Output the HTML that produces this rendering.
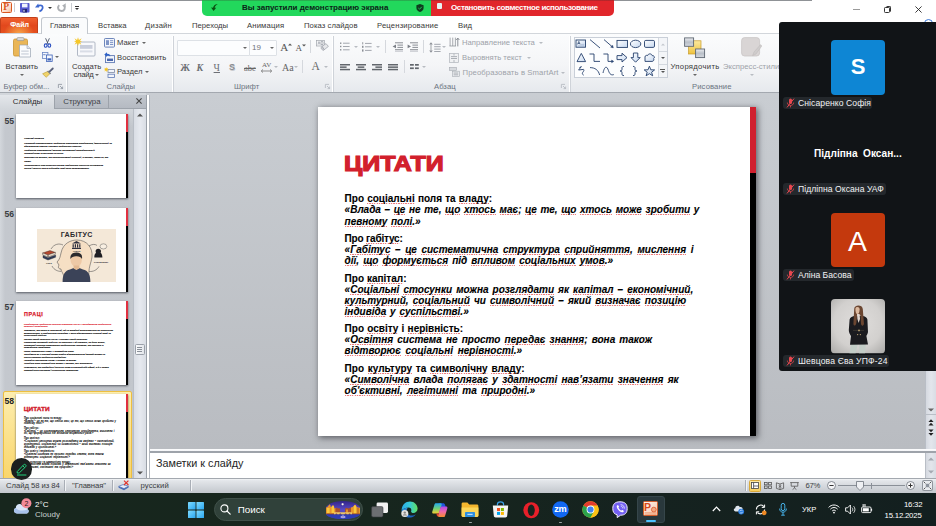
<!DOCTYPE html>
<html lang="ru">
<head>
<meta charset="utf-8">
<title>PowerPoint</title>
<style>
*{box-sizing:border-box;margin:0;padding:0}
html,body{width:936px;height:526px;overflow:hidden;background:#fff}
body{font-family:"Liberation Sans",sans-serif;font-size:7.7px;color:#3a3a3a;position:relative}
.abs,.t,svg{position:absolute}
.t{white-space:pre;line-height:1}
svg{overflow:visible}
#titlebar{left:0;top:0;width:936px;height:16px;background:#fff}
#topline{left:6px;top:0;width:806px;height:1px;background:#8f9296}
#tabsrow{left:0;top:16px;width:936px;height:17px;background:#fff}
#ribbon{left:0;top:33px;width:936px;height:59px;background:linear-gradient(#fbfcfd,#f4f5f7 55%,#e6e9ed);border-top:1px solid #d2d6db}
#ribline{left:0;top:92px;width:936px;height:1.6px;background:linear-gradient(#9ea3aa,#b4b9bf)}
#work{left:0;top:93px;width:936px;height:385px;background:#c9cdd2}
#main{left:150px;top:93px;width:775px;height:356px;background:linear-gradient(#c9cdd2,#b9bcc1)}
#slide{left:318px;top:107px;width:438px;height:329px;background:#fff;box-shadow:1px 1px 6px 0.5px rgba(50,52,58,.68)}
#status{left:0;top:478px;width:936px;height:14.5px;background:linear-gradient(#f3f4f6 0,#e3e6ea 12%,#c3c7cd 100%);border-top:1px solid #a3a8af}
#taskbar{left:0;top:492.5px;width:936px;height:33.5px;background:linear-gradient(90deg,#17261d 0,#17261e 40%,#15221f 70%,#131f1f 100%)}
#zoom{left:779px;top:22px;width:157px;height:349px;background:#111417;border-radius:3px 0 0 3px}
#green{left:202px;top:0;width:230px;height:16px;background:linear-gradient(#2b9047 0,#22d85c 1.2px);border-radius:0 0 0 5px}
#red{left:431px;top:0;width:183px;height:16px;background:linear-gradient(#96272a 0,#e1262b 1.2px);border-radius:0 0 5px 0}
.ban{font-weight:bold;font-size:8px;top:4px}
.tab{font-size:7.7px;top:21.5px;color:#3a3a3a}
#filetab{left:0;top:17px;width:38px;height:16px;border-radius:2px 2px 0 0;background:radial-gradient(ellipse at 50% 110%,#f8a84a 0,rgba(248,168,74,0) 60%),linear-gradient(#f0602f 0,#e2481d 50%,#e5501f 100%);border:1px solid #c2401a;border-bottom:0}
#hometab{left:41.3px;top:17px;width:46.7px;height:17px;border-radius:3px 3px 0 0;background:#fafbfc;border:1px solid #c3c8ce;border-bottom:0}
.gl{top:82.5px;color:#6b7480}
.sep{top:36px;width:2px;height:56px;background:linear-gradient(90deg,#fff 50%,#cfd3d9 50%)}
.rl{color:#3a3a3a}
.dis{color:#9da2a9}
.arr{width:0;height:0;border-left:2px solid transparent;border-right:2px solid transparent;border-top:2.5px solid #666}
.arr.dis{border-top-color:#b8bcc2}
.sl{position:absolute;left:344.6px;font-size:10px;font-weight:bold;line-height:1;white-space:pre;color:#000;-webkit-text-stroke:0.1px #000}
.sl.it{font-style:italic}
.sl u{text-decoration:none;background:repeating-linear-gradient(90deg,rgba(225,60,60,.75) 0 1.3px,rgba(225,60,60,.15) 1.3px 2.4px) 0 calc(100% - 0.3px)/100% 0.9px no-repeat}
.st{position:absolute;font-size:21.2px;font-weight:bold;color:#d2202c;transform-origin:0 0;transform:scaleX(1.178);-webkit-text-stroke:1.2px #d2202c;line-height:1;white-space:pre}
#sbar_r{left:750px;top:107px;width:6px;height:66px;background:#d0202e}
#sbar_k{left:750px;top:173px;width:6px;height:263px;background:#000}
#pane{left:0;top:93px;width:146px;height:385px;background:linear-gradient(#d3d7dc 16px,rgba(211,215,220,0) 34px),linear-gradient(90deg,#d3d7dc 0,#c4c8ce 5px,#c2c6cc 100%)}
#panehdr{left:0;top:95px;width:146px;height:13.5px;background:linear-gradient(#c2c7ce,#b5bac2);border-bottom:1px solid #9da3ab}
#ptab1{left:0;top:94.5px;width:54.5px;height:14.5px;background:linear-gradient(#e4e7eb,#d3d7dc);border-right:1px solid #9da3ab}
#ptab2{left:54px;top:95px;width:55px;height:13px;border-right:1px solid #9da3ab}
.ptxt{font-size:7.9px;top:97.7px;color:#2b2b2b}
#pscroll{left:133px;top:109px;width:13px;height:369px;background:linear-gradient(90deg,#d9dde4,#e6e9ef 50%,#d9dde4);border-left:1px solid #b9bec6}
#split{left:146px;top:95px;width:4px;height:383px;background:#fff;border-left:1px solid #9aa0a8;border-right:1px solid #b3b8bf}
.th{position:absolute;left:16.3px;width:112px;height:84.5px;background:#fff;box-shadow:0 0.5px 2px rgba(40,45,55,.7);overflow:hidden}
.th .r{position:absolute;right:0;top:0;width:2.6px;height:18px;background:#e03040}
.th .k{position:absolute;right:0;top:18px;width:2.6px;height:67px;background:#000}
.tn{font-size:8.6px;font-weight:bold;color:#3a3d42;left:4.5px}
.mini{position:absolute;white-space:pre;line-height:1;color:#111;font-size:2.6px;font-weight:bold;-webkit-text-stroke:0.12px currentColor}
#sel{left:2.5px;top:391px;width:129.5px;height:90px;background:linear-gradient(#fdeeb0,#f9d56a);border:1px solid #eebf3f;border-radius:2px}
#vscroll{left:925px;top:93px;width:11px;height:356px;background:linear-gradient(90deg,#d5d9e0,#e3e6ec 50%,#d9dde4);border-left:1px solid #b9bec6}
#hsplit{left:150px;top:448.5px;width:786px;height:4px;background:linear-gradient(#fdfdfe 0,#f1f3f5 60%,#9ea3aa 60%,#9ea3aa 100%)}
#notes{left:150px;top:452.5px;width:775px;height:25.5px;background:#fff}
#nscroll{left:925px;top:452.5px;width:11px;height:25.5px;background:linear-gradient(90deg,#d5d9e0,#e3e6ec 50%,#d9dde4);border-left:1px solid #b9bec6}
.ssep{top:480px;width:2px;height:11px;background:linear-gradient(90deg,#a9aeb6 50%,#f2f4f6 50%)}
.stxt{top:482.2px;color:#3a3d42}
.tb{color:#fff}
.nm{position:absolute;height:11.5px;left:783px;background:#24282c;border-radius:3px}
.nmt{font-size:8.6px;color:#f2f3f4;left:798px}
.m57{font-size:2.35px;-webkit-text-stroke:0.12px currentColor}

</style>
</head>
<body>
<div id="titlebar" class="abs"></div>
<div id="topline" class="abs"></div>
<div id="tabsrow" class="abs"></div>
<div id="ribbon" class="abs"></div>
<div id="ribline" class="abs"></div>
<div id="work" class="abs"></div>
<div id="main" class="abs"></div>
<div id="slide" class="abs"></div>

<div id="green" class="abs"></div>
<svg style="left:204px;top:0" width="30" height="16" viewBox="0 0 30 16"><path d="M13.9 4.1 C11.2 4.2 9.6 5.6 9 7.7 L7 7.6 L9.6 10.9 L12.2 7.8 L10.7 7.8 C11 6.3 12 5 13.9 4.1 Z" fill="#0a5212"/></svg>
<span class="t ban" style="left:242px;top:4.4px;color:#0b2418">Вы запустили демонстрацию экрана</span>
<svg style="left:416px;top:4px" width="8" height="8" viewBox="0 0 8 8"><path d="M4 0 L7.6 1.2 V4 C7.6 6 5.8 7.4 4 8 C2.2 7.4 0.4 6 0.4 4 V1.2 Z" fill="#0f3d1f"/><path d="M2.3 4 L3.6 5.2 L5.8 2.8" stroke="#23d15c" stroke-width="0.9" fill="none"/></svg>
<div id="red" class="abs"></div>
<div class="abs" style="left:437px;top:3px;width:5px;height:6px;background:#e6f4f4;border-radius:1px"></div>
<span class="t ban" style="left:451px;top:4.4px;color:#fff;letter-spacing:-0.38px">Остановить совместное использование</span>
<div id="filetab" class="abs"></div>
<span class="t tab" style="left:10.2px;color:#fff;font-weight:bold;font-size:7.1px;top:21.9px">Файл</span>
<div id="hometab" class="abs"></div>
<span class="t tab" style="left:50px">Главная</span>
<span class="t tab" style="left:98px">Вставка</span>
<span class="t tab" style="left:145px;letter-spacing:.2px">Дизайн</span>
<span class="t tab" style="left:192px">Переходы</span>
<span class="t tab" style="left:247px;letter-spacing:.15px">Анимация</span>
<span class="t tab" style="left:304px;letter-spacing:.05px">Показ слайдов</span>
<span class="t tab" style="left:377px;letter-spacing:.15px">Рецензирование</span>
<span class="t tab" style="left:458px">Вид</span>

<!-- quick access toolbar -->
<div class="abs" style="left:1px;top:2px;width:11px;height:11px;border-radius:1.5px;background:linear-gradient(135deg,#fff,#fbd9c4 70%,#f4b48e);border:1px solid #d9561f"></div>
<span class="t" style="left:3.2px;top:3px;font-family:'Liberation Serif',serif;font-weight:bold;font-size:9.5px;color:#d9541a">P</span>
<div class="abs" style="left:14px;top:3px;width:1px;height:9px;background:#c9ccd1"></div>
<svg style="left:20px;top:3px" width="10" height="10" viewBox="0 0 10 10"><rect x="0" y="0" width="9.5" height="9.5" rx="0.8" fill="#5558cf"/><rect x="2" y="0.6" width="5.5" height="3.8" fill="#f1f3fd"/><rect x="2.6" y="6" width="4.4" height="3.5" fill="#23246e"/><rect x="3.4" y="6.8" width="1.2" height="2" fill="#dfe5ff"/></svg>
<svg style="left:35.2px;top:3.2px" width="9" height="9" viewBox="0 0 9 9"><path d="M2.6 3.2 C5.4 1.4 8.2 2.6 7.6 5.2 C7.2 6.8 5.8 7.8 4.4 8.4" fill="none" stroke="#3d68d0" stroke-width="1.7"/><path d="M0 4.6 L3.2 0.4 L4.2 4.4 Z" fill="#3d68d0"/></svg>
<div class="abs arr" style="left:47.5px;top:6.5px;border-top-color:#333"></div>
<svg style="left:57.4px;top:3.2px" width="9" height="9" viewBox="0 0 9 9"><path d="M2.2 2.2 C0 4.4 1.2 8 4.4 8 C7.6 8 8.8 4.6 6.8 2.4" fill="none" stroke="#adb0b4" stroke-width="1.9"/><path d="M8.8 0.2 L8.6 4.2 L5 2.8 Z" fill="#adb0b4"/></svg>
<div class="abs" style="left:71px;top:3px;width:1px;height:9px;background:#c9ccd1"></div>
<div class="abs" style="left:74.5px;top:5.5px;width:4.5px;height:1px;background:#333"></div>
<div class="abs arr" style="left:74.7px;top:7.5px;border-top-color:#333"></div>
<!-- window controls -->
<div class="abs" style="left:853px;top:9px;width:7px;height:1px;background:#9a9a9a"></div>
<div class="abs" style="left:884px;top:7.3px;width:5.8px;height:5.6px;border:1px solid #333;border-radius:1.3px"></div>
<div class="abs" style="left:885.6px;top:6px;width:5.5px;height:5.5px;border-top:1px solid #333;border-right:1px solid #333;border-radius:1.5px 2px 1.5px 0"></div>
<svg style="left:915.2px;top:6px" width="7" height="7" viewBox="0 0 8 8"><path d="M0.5 0.5 L7.5 7.5 M7.5 0.5 L0.5 7.5" stroke="#222" stroke-width="1" fill="none"/></svg>
<div class="abs" style="left:923.5px;top:19px;width:9px;height:9px;border-radius:50%;background:#fff;border:1.6px solid #3b78d8"></div>

<!-- Clipboard group -->
<svg style="left:13px;top:37px" width="19" height="21" viewBox="0 0 19 21">
<rect x="0.5" y="2" width="14" height="17" rx="1.5" fill="#eab657" stroke="#c99535" stroke-width="0.8"/>
<rect x="4" y="0.6" width="7" height="3" rx="1" fill="#d9d9d9" stroke="#8d8d8d" stroke-width="0.6"/>
<path d="M6.5 8 H14 L17.5 11.5 V20 H6.5 Z" fill="#fafbfd" stroke="#9aa3b2" stroke-width="0.7"/>
<path d="M14 8 V11.5 H17.5" fill="#dfe4ec" stroke="#9aa3b2" stroke-width="0.6"/>
<rect x="8.2" y="13.4" width="7.5" height="1.5" fill="#d3d8e0"/><rect x="8.2" y="16.2" width="7.5" height="1.5" fill="#d3d8e0"/>
</svg>
<span class="t rl" style="left:5.5px;top:62.7px">Вставить</span>
<div class="abs arr" style="left:19.5px;top:73.5px"></div>
<svg style="left:43.5px;top:37.5px" width="7" height="10" viewBox="0 0 7 10"><path d="M1.6 0.3 L4.2 6 M5.4 0.3 L2.8 6" stroke="#4a5568" stroke-width="0.9" fill="none"/><ellipse cx="1.7" cy="7.6" rx="1.4" ry="1.7" fill="none" stroke="#2a4fc0" stroke-width="1.1"/><ellipse cx="5.3" cy="7.6" rx="1.4" ry="1.7" fill="none" stroke="#2a4fc0" stroke-width="1.1"/></svg>
<svg style="left:42px;top:52px" width="11" height="10" viewBox="0 0 11 10"><rect x="0.4" y="0.4" width="5.5" height="6" fill="#f4f7fd" stroke="#6b86c4" stroke-width="0.8"/><rect x="4.4" y="3" width="5.8" height="6.4" fill="#f4f7fd" stroke="#3d62b8" stroke-width="0.8"/><rect x="5.4" y="6.3" width="3.8" height="2.2" fill="#3d62b8"/><rect x="1.2" y="2.2" width="2.4" height="1" fill="#6b86c4"/></svg>
<div class="abs arr" style="left:55px;top:56px"></div>
<svg style="left:42px;top:68px" width="12" height="10" viewBox="0 0 12 10"><path d="M10.8 0.5 L7 4.2" stroke="#59607a" stroke-width="1.8" stroke-linecap="round"/><path d="M6.2 3.2 L8.2 5.4 L4.2 9.3 L0.6 5.8 Z" fill="#f0d36a" stroke="#b89a2e" stroke-width="0.6"/><path d="M5.6 3 L8.6 5.8" stroke="#7a7f8c" stroke-width="1.3"/></svg>
<span class="t gl" style="left:3.5px">Буфер обм...</span>
<svg style="left:58px;top:84px" width="5" height="5" viewBox="0 0 5 5"><path d="M0.4 4 V0.4 H4" stroke="#8c939d" stroke-width="0.8" fill="none"/><path d="M2 2 L4.6 4.6 M4.6 2.6 V4.6 H2.6" stroke="#8c939d" stroke-width="0.8" fill="none"/></svg>
<div class="abs sep" style="left:65.5px"></div>
<!-- Slides group -->
<svg style="left:74px;top:37px" width="22" height="21" viewBox="0 0 22 21">
<rect x="3.5" y="5" width="17.5" height="14" rx="1" fill="#f8f9fc" stroke="#a8b0be" stroke-width="0.9"/>
<rect x="6" y="8" width="12.5" height="3.8" fill="#c9cedb"/><rect x="6" y="13.4" width="12.5" height="2" fill="#d9dde6"/>
<path d="M4 0.2 L4.9 3 L7.6 1.2 L6 4 L8 4.6 L6 5.2 L7.4 7.8 L4.9 6.2 L4 9 L3.1 6.2 L0.5 7.8 L2 5.2 L0 4.6 L2 4 L0.5 1.2 L3.1 3 Z" fill="#f6c728"/>
</svg>
<span class="t rl" style="left:72px;top:62.7px">Создать</span>
<span class="t rl" style="left:73.5px;top:70.5px;letter-spacing:-.3px">слайд</span>
<div class="abs arr" style="left:95px;top:73.5px"></div>
<svg style="left:104px;top:37.5px" width="11" height="10" viewBox="0 0 11 10"><rect x="0.5" y="0.5" width="10" height="8.6" rx="0.8" fill="#f2f5fb" stroke="#5f79b4" stroke-width="0.9"/><rect x="2" y="2.2" width="3" height="4.8" fill="#7f95c6"/><rect x="6" y="2.2" width="3.2" height="1" fill="#7f95c6"/><rect x="6" y="4.1" width="3.2" height="1" fill="#7f95c6"/><rect x="6" y="6" width="3.2" height="1" fill="#7f95c6"/></svg>
<span class="t rl" style="left:117px;top:38.5px">Макет</span>
<div class="abs arr" style="left:142px;top:41.5px"></div>
<svg style="left:104px;top:51.5px" width="11" height="11" viewBox="0 0 11 11"><rect x="1.5" y="3.6" width="9" height="7" fill="#f2f5fb" stroke="#5f79b4" stroke-width="0.9"/><rect x="3" y="6.6" width="6" height="2.4" fill="#4a67ad"/><path d="M0.3 2.6 L3 0.2 V1.7 C5.4 1.6 6.4 2.6 6.2 4.6 C5.6 3.5 4.6 3.3 3 3.4 V5 Z" fill="#2f62c8"/></svg>
<span class="t rl" style="left:117px;top:54px">Восстановить</span>
<svg style="left:104px;top:66.5px" width="11" height="11" viewBox="0 0 11 11"><rect x="4" y="2.4" width="6.5" height="3" fill="#f2f5fb" stroke="#7d8aa6" stroke-width="0.8"/><rect x="4" y="7.2" width="6.5" height="3.2" fill="#f2f5fb" stroke="#5f79b4" stroke-width="0.8"/><path d="M2.2 0 L2.7 1.6 L4.2 0.8 L3.3 2.2 L4.6 2.6 L3.3 3 L4 4.6 L2.7 3.6 L2.2 5.2 L1.7 3.6 L0.3 4.6 L1.1 3 L0 2.6 L1.1 2.2 L0.3 0.8 L1.7 1.6 Z" fill="#f2c21d"/></svg>
<span class="t rl" style="left:117px;top:68.2px">Раздел</span>
<div class="abs arr" style="left:144.5px;top:70.5px"></div>
<span class="t gl" style="left:106.5px">Слайды</span>
<div class="abs sep" style="left:171.5px"></div>

<!-- Font group -->
<div class="abs" style="left:176.5px;top:40.3px;width:73.5px;height:15.4px;background:#fcfdfe;border:1px solid #dde1e6;border-radius:1px"></div>
<div class="abs arr" style="left:242.5px;top:47px"></div>
<div class="abs" style="left:249.3px;top:40.3px;width:27.7px;height:15.4px;background:#fcfdfe;border:1px solid #dde1e6;border-radius:1px"></div>
<span class="t" style="left:252px;top:44.3px;color:#707479;font-size:8px">19</span>
<div class="abs arr" style="left:269.7px;top:47px"></div>
<span class="t" style="left:280.3px;top:42px;font-family:'Liberation Serif',serif;font-size:11px;color:#555">A</span>
<svg style="left:287.5px;top:43px" width="4" height="3" viewBox="0 0 4 3"><path d="M0 2.6 L2 0.4 L4 2.6 Z" fill="#555"/></svg>
<span class="t" style="left:295.6px;top:44px;font-family:'Liberation Serif',serif;font-size:9px;color:#555">A</span>
<svg style="left:301.5px;top:43.5px" width="4" height="3" viewBox="0 0 4 3"><path d="M0 0.4 L2 2.6 L4 0.4 Z" fill="#555"/></svg>
<div class="abs" style="left:310px;top:40px;width:1px;height:13px;background:#d5d8dd"></div>
<svg style="left:316px;top:40px" width="13" height="12" viewBox="0 0 13 12"><rect x="0.5" y="0.5" width="8" height="5.5" fill="#f3f4f6" stroke="#a0a4ab" stroke-width="0.7"/><path d="M2 4.5 L3 1.6 L4 4.5 M5 1.6 h2 v2.9 h-2 z" stroke="#8a8f98" stroke-width="0.6" fill="none"/><path d="M6 6.5 L10 3.6 L12.4 6.4 L8.4 9.6 Z" fill="#e6e7ea" stroke="#9a9ea6" stroke-width="0.7"/><path d="M6 6.5 L8.4 9.6 L7 10.6 L4.8 8 Z" fill="#c8cad0" stroke="#9a9ea6" stroke-width="0.6"/></svg>
<span class="t" style="left:180.3px;top:62.8px;font-family:'Liberation Serif',serif;font-weight:bold;font-size:9.8px;color:#6d7075">Ж</span>
<span class="t" style="left:196.5px;top:62.8px;font-family:'Liberation Serif',serif;font-style:italic;font-weight:bold;font-size:9.8px;color:#6d7075">К</span>
<span class="t" style="left:213.6px;top:62.8px;font-family:'Liberation Serif',serif;font-size:9.8px;color:#6d7075;text-decoration:underline">Ч</span>
<span class="t" style="left:229px;top:62.5px;font-family:'Liberation Sans',sans-serif;font-weight:bold;font-size:9px;color:#8a8d92;text-shadow:0.6px 0.6px 0 #c9cbcf">S</span>
<span class="t" style="left:244px;top:63.5px;font-family:'Liberation Serif',serif;font-size:8.5px;color:#666;text-decoration:line-through">abe</span>
<span class="t" style="left:262px;top:61.5px;font-family:'Liberation Serif',serif;font-size:7px;color:#666">AV</span>
<svg style="left:261px;top:68.5px" width="11" height="4" viewBox="0 0 11 4"><path d="M0.3 2 H10.7 M2 0.4 L0.3 2 L2 3.6 M9 0.4 L10.7 2 L9 3.6" stroke="#666" stroke-width="0.7" fill="none"/></svg>
<div class="abs arr dis" style="left:273.5px;top:66px"></div>
<span class="t" style="left:282px;top:62.5px;font-family:'Liberation Serif',serif;font-size:10px;color:#666">Aa</span>
<div class="abs arr dis" style="left:294px;top:66px"></div>
<div class="abs" style="left:302px;top:60px;width:1px;height:13px;background:#d5d8dd"></div>
<span class="t" style="left:311.5px;top:61px;font-family:'Liberation Serif',serif;font-size:11.5px;color:#666">A</span>
<div class="abs arr dis" style="left:323.5px;top:66px"></div>
<span class="t gl" style="left:234px">Шрифт</span>
<svg style="left:324.5px;top:84px" width="5" height="5" viewBox="0 0 5 5"><path d="M0.4 4 V0.4 H4" stroke="#b3b8bf" stroke-width="0.8" fill="none"/><path d="M2 2 L4.6 4.6 M4.6 2.6 V4.6 H2.6" stroke="#b3b8bf" stroke-width="0.8" fill="none"/></svg>
<div class="abs sep" style="left:332px"></div>
<!-- Paragraph group -->
<svg style="left:340px;top:42px" width="10" height="9" viewBox="0 0 10 9"><g fill="#8a8e95"><rect x="0" y="0.5" width="1.4" height="1.4"/><rect x="0" y="3.8" width="1.4" height="1.4"/><rect x="0" y="7.1" width="1.4" height="1.4"/></g><g fill="#a3a7ae"><rect x="3" y="0.7" width="6.6" height="1"/><rect x="3" y="4" width="6.6" height="1"/><rect x="3" y="7.3" width="6.6" height="1"/></g></svg>
<div class="abs arr dis" style="left:353.5px;top:46px"></div>
<svg style="left:362px;top:41.5px" width="10" height="10" viewBox="0 0 10 10"><g fill="#8a8e95"><rect x="0.3" y="0.2" width="0.9" height="2.2"/><rect x="0" y="3.8" width="1.5" height="2"/><rect x="0" y="7.4" width="1.5" height="2.2"/></g><g fill="#a3a7ae"><rect x="3" y="0.9" width="6.6" height="1"/><rect x="3" y="4.3" width="6.6" height="1"/><rect x="3" y="7.9" width="6.6" height="1"/></g></svg>
<div class="abs arr dis" style="left:375.5px;top:46px"></div>
<div class="abs" style="left:384.5px;top:40px;width:1px;height:13px;background:#d5d8dd"></div>
<svg style="left:391.5px;top:42px" width="11" height="10" viewBox="0 0 11 10"><g fill="#8a8e95"><rect x="3" y="0.3" width="8" height="1"/><rect x="5.4" y="2.6" width="5.6" height="1"/><rect x="5.4" y="4.9" width="5.6" height="1"/><rect x="3" y="7.2" width="8" height="1"/></g><path d="M4 2.6 L0.6 4.4 L4 6.2 Z" fill="#7a7e86"/><rect x="3" y="8.8" width="8" height="0.8" fill="#b8bcc2"/></svg>
<svg style="left:407px;top:42px" width="11" height="10" viewBox="0 0 11 10"><g fill="#8a8e95"><rect x="3" y="0.3" width="8" height="1"/><rect x="5.4" y="2.6" width="5.6" height="1"/><rect x="5.4" y="4.9" width="5.6" height="1"/><rect x="3" y="7.2" width="8" height="1"/></g><path d="M0.6 2.6 L4 4.4 L0.6 6.2 Z" fill="#7a7e86"/><rect x="3" y="8.8" width="8" height="0.8" fill="#b8bcc2"/></svg>
<div class="abs" style="left:422.5px;top:40px;width:1px;height:13px;background:#d5d8dd"></div>
<svg style="left:428.5px;top:41.5px" width="12" height="11" viewBox="0 0 12 11"><path d="M2 0.3 L0.2 2.6 H3.8 Z M2 10.7 L0.2 8.4 H3.8 Z" fill="#8a8e95"/><rect x="1.6" y="2.4" width="0.8" height="6.2" fill="#8a8e95"/><g fill="#a3a7ae"><rect x="5.2" y="1.8" width="6.4" height="1"/><rect x="5.2" y="4.2" width="6.4" height="1"/><rect x="5.2" y="6.6" width="6.4" height="1"/><rect x="5.2" y="9" width="6.4" height="1"/></g></svg>
<div class="abs arr dis" style="left:441.5px;top:46px"></div>
<!-- row 2 align -->
<svg style="left:340px;top:63.8px" width="10" height="7" viewBox="0 0 10 7"><g fill="#62666c"><rect x="0" y="0" width="10" height="1.5"/><rect x="0" y="2.4" width="6.6" height="1.5"/><rect x="0" y="4.8" width="10" height="1.5"/></g></svg>
<svg style="left:356px;top:63.8px" width="10" height="7" viewBox="0 0 10 7"><g fill="#62666c"><rect x="0" y="0" width="10" height="1.5"/><rect x="1.7" y="2.4" width="6.6" height="1.5"/><rect x="0" y="4.8" width="10" height="1.5"/></g></svg>
<svg style="left:372px;top:63.8px" width="10" height="7" viewBox="0 0 10 7"><g fill="#62666c"><rect x="0" y="0" width="10" height="1.5"/><rect x="3.4" y="2.4" width="6.6" height="1.5"/><rect x="0" y="4.8" width="10" height="1.5"/></g></svg>
<svg style="left:388px;top:63.8px" width="10" height="7" viewBox="0 0 10 7"><g fill="#62666c"><rect x="0" y="0" width="10" height="1.5"/><rect x="0" y="2.4" width="10" height="1.5"/><rect x="0" y="4.8" width="10" height="1.5"/></g></svg>
<div class="abs" style="left:404px;top:60px;width:1px;height:13px;background:#d5d8dd"></div>
<svg style="left:410px;top:64.2px" width="9" height="6" viewBox="0 0 9 6"><g fill="#62666c"><rect x="0" y="0" width="3.8" height="1.7"/><rect x="5" y="0" width="3.8" height="1.7"/><rect x="0" y="3.4" width="3.8" height="1.7"/><rect x="5" y="3.4" width="3.8" height="1.7"/></g></svg>
<div class="abs arr dis" style="left:422px;top:66px"></div>
<!-- right column of paragraph group -->
<svg style="left:449px;top:37.3px" width="11" height="10" viewBox="0 0 10 10" preserveAspectRatio="none"><path d="M1 9 V0.6 M3.4 9 V0.6 M5.8 9 V0.6" stroke="#8a8e95" stroke-width="0.7"/><path d="M8 9.4 V1.6 M6.6 3 L8 1 L9.4 3" stroke="#7a7e86" stroke-width="0.8" fill="none"/><path d="M0.4 9 H6.4" stroke="#8a8e95" stroke-width="0.7"/></svg>
<span class="t dis" style="left:462px;top:38.5px">Направление текста</span>
<div class="abs arr dis" style="left:539px;top:41.5px"></div>
<svg style="left:449px;top:52.5px" width="10" height="10" viewBox="0 0 10 10"><rect x="0.5" y="0.5" width="9" height="9" fill="#f0f1f3" stroke="#b0b4bb" stroke-width="0.7"/><g fill="#a3a7ae"><rect x="2" y="3.2" width="6" height="0.9"/><rect x="2" y="5" width="6" height="0.9"/></g><path d="M5 0.8 V2.6 M5 9.2 V7" stroke="#9a9ea6" stroke-width="0.7"/></svg>
<span class="t dis" style="left:462px;top:54px">Выровнять текст</span>
<div class="abs arr dis" style="left:526.5px;top:56.5px"></div>
<svg style="left:448.5px;top:67px" width="11" height="10" viewBox="0 0 11 10"><rect x="0.4" y="0.4" width="7" height="3" fill="#d7dade" stroke="#a6abb2" stroke-width="0.6"/><rect x="3.4" y="4.2" width="7" height="5.4" fill="#eceef1" stroke="#a6abb2" stroke-width="0.6"/><rect x="4.6" y="5.6" width="4.6" height="0.9" fill="#a3a7ae"/><rect x="4.6" y="7.4" width="4.6" height="0.9" fill="#a3a7ae"/></svg>
<span class="t dis" style="left:462.5px;top:68.9px;letter-spacing:.12px">Преобразовать в SmartArt</span>
<div class="abs arr dis" style="left:560.5px;top:71.5px"></div>
<span class="t gl" style="left:434px">Абзац</span>
<svg style="left:561px;top:84px" width="5" height="5" viewBox="0 0 5 5"><path d="M0.4 4 V0.4 H4" stroke="#b3b8bf" stroke-width="0.8" fill="none"/><path d="M2 2 L4.6 4.6 M4.6 2.6 V4.6 H2.6" stroke="#b3b8bf" stroke-width="0.8" fill="none"/></svg>
<div class="abs sep" style="left:568.5px"></div>

<!-- Drawing group: shapes gallery -->
<div class="abs" style="left:573.5px;top:37px;width:94px;height:40.5px;background:#fcfdfe;border:1px solid #c9cfd8"></div>
<div class="abs" style="left:657.5px;top:37.5px;width:9.5px;height:39.5px;background:#f3f5f8;border-left:1px solid #d3d8df"></div>
<div class="abs" style="left:657.5px;top:50.5px;width:9.5px;height:1px;background:#d3d8df"></div>
<div class="abs" style="left:657.5px;top:64px;width:9.5px;height:1px;background:#d3d8df"></div>
<svg style="left:660.5px;top:43px" width="4" height="3" viewBox="0 0 4 3"><path d="M0 2.6 L2 0.4 L4 2.6 Z" fill="#c3c7cd"/></svg>
<div class="abs arr" style="left:660.5px;top:56.5px;border-top-color:#555"></div>
<div class="abs" style="left:660.3px;top:68.5px;width:4.5px;height:1px;background:#555"></div>
<div class="abs arr" style="left:660.5px;top:70.5px;border-top-color:#555"></div>
<svg style="left:574px;top:37px" width="84" height="41" viewBox="574 37 84 41" fill="none" stroke="#25406c" stroke-width="0.9">
<defs><linearGradient id="sg" x1="0" y1="0" x2="1" y2="1"><stop offset="0" stop-color="#ffffff"/><stop offset="1" stop-color="#c6d8f0"/></linearGradient></defs>
<!-- row1 -->
<rect x="576" y="40" width="9.5" height="7.2" fill="url(#sg)"/><rect x="576.4" y="40.4" width="8.7" height="2.2" fill="#2f4d7c" stroke="none" opacity=".0"/><path d="M577.5 44.4 L578.8 41.4 L580.1 44.4 M578 43.5 H579.6" stroke-width="0.7"/><path d="M581 44.4 H584.2 M577.5 45.8 H584.2" stroke="#8aa0c4" stroke-width="0.5"/>
<path d="M590 39.6 L600 48"/>
<path d="M604 39.6 L613 47.4"/><path d="M613.4 47.8 L610.6 47.2 L612.6 45.2 Z" fill="#2f4d7c" stroke-width="0.4"/>
<rect x="617" y="40.4" width="10.5" height="7" fill="url(#sg)"/>
<ellipse cx="635.6" cy="43.9" rx="5.2" ry="3.7" fill="url(#sg)"/>
<rect x="644.5" y="40.4" width="10" height="7" rx="1.3" fill="url(#sg)"/>
<!-- row2 -->
<path d="M581.3 53.4 L585.6 61.6 H577 Z" fill="url(#sg)"/>
<path d="M589.5 54 H594 V61.4 H600"/>
<path d="M603.4 54 H608 V61.4 H613"/><path d="M613.8 61.4 L611.6 60 V62.8 Z" fill="#2f4d7c" stroke-width="0.4"/>
<path d="M617 55.6 H622 V53.2 L627 57.6 L622 62 V59.6 H617 Z" fill="url(#sg)"/>
<path d="M633.4 53 H637.8 V57.6 H640.2 L635.6 62.2 L631 57.6 H633.4 Z" fill="url(#sg)"/>
<path d="M645 61.4 V57 C645 55.4 646.6 55 647.6 55.6 C648 53.4 651.6 53.2 652.2 55.6 C654.6 55.4 655 58 653.6 58.6 C654.4 60 653.4 61.4 652 61.4 Z" fill="url(#sg)"/>
<!-- row3 -->
<path d="M579.4 67.6 L581.4 66.6 L578.6 70 L583.4 69.4 C584.6 69.6 583.6 71.4 582.6 72.6 C582 73.6 582.6 74.6 583.6 75.2" />
<path d="M590 67.6 C595 67.6 598.4 70 599.6 75"/>
<path d="M603 73 C604.6 66 606.8 65.6 608.4 70.4 C609.6 74.4 611.4 75.4 613.8 74.6"/>
<path d="M624 66.4 C621.6 66.4 622 67.6 622 69.2 C622 70.6 621.4 71 620 71 C621.4 71 622 71.4 622 72.8 C622 74.6 621.6 75.6 624 75.6"/>
<path d="M633 66.4 C635.4 66.4 635 67.6 635 69.2 C635 70.6 635.6 71 637 71 C635.6 71 635 71.4 635 72.8 C635 74.6 635.4 75.6 633 75.6"/>
<path d="M649.4 66.2 L650.8 69.8 L654.6 69.9 L651.6 72.2 L652.7 75.8 L649.4 73.7 L646.1 75.8 L647.2 72.2 L644.2 69.9 L648 69.8 Z" fill="url(#sg)"/>
</svg>
<!-- Arrange -->
<svg style="left:684px;top:36.5px" width="22" height="21" viewBox="0 0 22 21">
<defs><linearGradient id="ag" x1="0" y1="0" x2="0" y2="1"><stop offset="0" stop-color="#eef0f3"/><stop offset=".5" stop-color="#b9bfc8"/><stop offset="1" stop-color="#d5d9df"/></linearGradient><linearGradient id="ay" x1="0" y1="0" x2="0" y2="1"><stop offset="0" stop-color="#fbe9a0"/><stop offset="1" stop-color="#eec23e"/></linearGradient></defs>
<rect x="4.6" y="3.8" width="12.4" height="13.2" fill="url(#ay)" stroke="#c89b2a" stroke-width="0.7"/>
<rect x="0.6" y="0.9" width="9" height="8.4" fill="url(#ag)" stroke="#5f6773" stroke-width="0.9"/>
<rect x="11.6" y="12" width="9" height="8.6" fill="url(#ag)" stroke="#5f6773" stroke-width="0.9"/>
</svg>
<span class="t rl" style="left:670.5px;top:62.7px;letter-spacing:.3px">Упорядочить</span>
<div class="abs arr" style="left:693px;top:73.5px"></div>
<!-- quick styles (disabled) -->
<svg style="left:741px;top:37px" width="21" height="21" viewBox="0 0 21 21">
<rect x="0.6" y="0.6" width="18" height="18.4" rx="3" fill="#d9d5d5" stroke="#c9c5c5" stroke-width="0.8"/>
<path d="M19.6 7.6 L13 15 L11.6 18.6 L15 17 L20.8 9 Z" fill="#cfcccc" stroke="#bdb9b9" stroke-width="0.5"/>
</svg>
<span class="t dis" style="left:723px;top:62.7px">Экспресс-стили</span>
<div class="abs arr dis" style="left:749.5px;top:73.5px"></div>
<span class="t gl" style="left:692px;letter-spacing:.1px">Рисование</span>

<div id="pane" class="abs"></div>
<div id="panehdr" class="abs"></div>
<div id="ptab1" class="abs"></div>
<div id="ptab2" class="abs"></div>
<span class="t ptxt" style="left:12.8px">Слайды</span>
<span class="t ptxt" style="left:63.2px;color:#3f4349">Структура</span>
<svg style="left:136px;top:98px" width="6" height="6" viewBox="0 0 6 6"><path d="M0.4 0.4 L5.6 5.6 M5.6 0.4 L0.4 5.6" stroke="#444" stroke-width="1.1" fill="none"/></svg>
<div id="pscroll" class="abs"></div>
<svg style="left:137px;top:112.5px" width="6" height="4" viewBox="0 0 6 4"><path d="M0 3.6 L3 0.4 L6 3.6 Z" fill="#555"/></svg>
<svg style="left:137px;top:470.5px" width="6" height="4" viewBox="0 0 6 4"><path d="M0 0.4 L3 3.6 L6 0.4 Z" fill="#555"/></svg>
<div class="abs" style="left:135px;top:343.5px;width:9.5px;height:11px;background:linear-gradient(90deg,#fafbfc,#e3e6eb);border:1px solid #9aa0a9;border-radius:1.5px"></div>
<div class="abs" style="left:137.3px;top:346.5px;width:5px;height:1px;background:#8a9099"></div>
<div class="abs" style="left:137.3px;top:348.5px;width:5px;height:1px;background:#8a9099"></div>
<div class="abs" style="left:137.3px;top:350.5px;width:5px;height:1px;background:#8a9099"></div>
<div id="split" class="abs"></div>
<div id="sel" class="abs"></div>
<span class="t tn" style="top:116.7px">55</span>
<span class="t tn" style="top:210px">56</span>
<span class="t tn" style="top:303.3px">57</span>
<span class="t tn" style="top:396.5px;color:#222">58</span>
<!-- thumb 55 -->
<div class="th" style="top:113.5px"><div class="r"></div><div class="k"></div>
<div class="mini" style="left:8px;top:23px;font-size:2.35px">Ключові поняття</div>
<div class="mini" style="left:8px;top:28.6px;font-size:2.35px">Концепції передбачають соціальне пояснення розрізнення, ідентичності та</div>
<div class="mini" style="left:8px;top:31.4px;font-size:2.35px">відтворення певних типових соціальних практик.</div>
<div class="mini" style="left:8px;top:35.6px;font-size:2.35px">Соціальне походження і вибори обумовлені матеріальною й</div>
<div class="mini" style="left:8px;top:38.4px;font-size:2.35px">символічною культурою та групи.</div>
<div class="mini" style="left:8px;top:42.8px;font-size:2.35px">Важливо не вибори, що ретрансльовані культурі, а процес, через те, що</div>
<div class="mini" style="left:8px;top:46.6px;font-size:2.35px">люди.</div>
<div class="mini" style="left:8px;top:50.4px;font-size:2.35px">Допомогають нам побачити вплив соціальних структур на людське</div>
<div class="mini" style="left:8px;top:53.2px;font-size:2.35px">життя і несуть нам в руйнацію нові коло перешкоджень.</div>
</div>

<!-- thumb 56 -->
<div class="th" style="top:207.5px"><div class="r"></div><div class="k"></div>
<div style="position:absolute;left:20.7px;top:21.5px;width:79px;height:53px;background:#f4e8d8"></div>
<svg style="left:20.7px;top:21.5px" width="79" height="53" viewBox="0 0 79 53">
<path d="M27 50 C27 44 24 43 24 40 C21 40 21 38 22 36 L20 33 C23 30 23 28 24 24 C26 14 34 11 40 11 C50 11 56 19 55 28 C54 35 51 38 52 50 Z" fill="#f6dfc4" stroke="#3b3a3c" stroke-width="0.5"/>
<text x="39.7" y="8.3" text-anchor="middle" font-family="Liberation Sans, sans-serif" font-weight="bold" font-size="7.1" fill="#2c2b2e" letter-spacing="0.35">ГАБІТУС</text>
<g fill="#2f3040"><path d="M35 14.6 L39.5 12 L44 14.6 Z"/><rect x="35.6" y="15.2" width="1.2" height="3.4"/><rect x="37.8" y="15.2" width="1.2" height="3.4"/><rect x="40" y="15.2" width="1.2" height="3.4"/><rect x="42.2" y="15.2" width="1.2" height="3.4"/><rect x="35" y="18.8" width="9" height="1.2"/></g>
<text x="39.5" y="23.2" text-anchor="middle" font-family="Liberation Sans, sans-serif" font-weight="bold" font-size="2.3" fill="#2c2b2e">Освіта</text>
<g><path d="M5.6 24 L13 21.6 L18.4 23.4 L11 26 Z" fill="#b5482f" stroke="#3b2a28" stroke-width="0.4"/><path d="M5.6 24 V25.8 L11 28 V26 Z M11 26 L18.4 23.4 V25.2 L11 28 Z" fill="#f1e7d6" stroke="#3b2a28" stroke-width="0.4"/><path d="M6 26.6 L11 28.8 L18.6 26 V28.2 L11 31 L6 28.8 Z" fill="#2f3a55" stroke="#23283a" stroke-width="0.4"/></g>
<text x="12" y="34.6" text-anchor="middle" font-family="Liberation Sans, sans-serif" font-weight="bold" font-size="2.3" fill="#2c2b2e">Сім'я</text>
<path d="M57.4 28.6 C57 25.6 58.4 24.6 59 23.8 C58 22 59 19.8 61.2 19.8 C63.6 19.8 64.6 22 63.6 23.8 C64.6 24.8 65.4 26 65.4 28.6 Z" fill="#1f1f24"/>
<ellipse cx="66.4" cy="17.4" rx="3.4" ry="2.6" fill="#f8efe2" stroke="#3b3a3c" stroke-width="0.4"/>
<text x="64" y="34" text-anchor="middle" font-family="Liberation Sans, sans-serif" font-weight="bold" font-size="2.3" fill="#2c2b2e">Середовище</text>
<path d="M14 20 C17 15 22 14 26 16 M52 17 C55 15 58 15 60 16.4 M15 37 C17 41 21 42.4 24 42.4 M52 42.4 C56 43 60 41 62 37.4" fill="none" stroke="#3b3a3c" stroke-width="0.5"/>
<path d="M33.6 31 C33.6 25.4 36 24 39.4 24 C43 24 45 26 44.8 31 C44.6 35 42.6 37.6 39.4 37.6 C36 37.6 33.8 35 33.6 31 Z" fill="#eec9a6"/>
<path d="M33.4 30 C33 25 35.6 23.4 39.6 23.4 C43.6 23.4 45.6 25.6 45 30 C44 28 42 27 39 27.2 C36.4 27.4 34.6 28 33.4 30 Z" fill="#2b2a2e"/>
<path d="M25.6 53 C25.6 45 28 41.6 33 40.4 L36.6 39 L39.4 40.6 L42.4 39 L46 40.4 C51 41.6 53.4 45 53.4 53 Z" fill="#3b4358"/>
<path d="M36.6 36.6 V39.4 L39.4 41 L42.4 39.4 V36.6 Z" fill="#e3b992"/>
</svg></div>
<!-- thumb 57 -->
<div class="th" style="top:300.5px"><div class="r"></div><div class="k"></div>
<div class="mini" style="left:7.6px;top:11.6px;font-size:5.4px;color:#d8232f;letter-spacing:.65px;-webkit-text-stroke:.25px #d8232f">ПРАЦІ</div>
<div class="mini m57" style="left:7.6px;top:22px;color:#e0303c">Розрізнення: соціальна критика судження (1979) – дослідження соціальних</div>
<div class="mini m57" style="left:7.6px;top:24.8px;color:#e0303c">практик і розрізнень.</div>
<div class="mini m57" style="left:7.6px;top:28.6px">Доводить, що смаки в мистецтві, їжі та дозвіллі визначаються не особистим</div>
<div class="mini m57" style="left:7.6px;top:31.2px">вподобанням, а соціальною позицією – вони відтворюють класові межі та</div>
<div class="mini m57" style="left:7.6px;top:33.8px">культурний капітал.</div>
<div class="mini m57" style="left:7.6px;top:37.4px">Начерк теорії практики (1972) – основи теорії практики.</div>
<div class="mini m57" style="left:7.6px;top:40.6px">Розробляє концепції габітусу та практики – дії людини, на його думку,</div>
<div class="mini m57" style="left:7.6px;top:43.2px">зумовлені глибоко засвоєними соціальними нормами, що керують її</div>
<div class="mini m57" style="left:7.6px;top:45.8px">поведінкою несвідомо.</div>
<div class="mini m57" style="left:7.6px;top:49.2px">Homo academicus (1984) – академічне поле.</div>
<div class="mini m57" style="left:7.6px;top:52.4px">Досліджує як у системі вищої освіти відтворюються ієрархії влади та</div>
<div class="mini m57" style="left:7.6px;top:55px">структурована соціальна нерівність.</div>
<div class="mini m57" style="left:7.6px;top:58.6px">Чоловіче панування (1998) – гендер та влада.</div>
<div class="mini m57" style="left:7.6px;top:61.8px">Аналізує роль символічної влади – «влади, яку визнають».</div>
<div class="mini m57" style="left:7.6px;top:65.4px">Стверджує, що нерівність існує не лише в економічній сфері, а й у самих</div>
<div class="mini m57" style="left:7.6px;top:68px">символічних системах і культурних уявленнях.</div>
</div>
<!-- thumb 58 -->
<div class="th" style="top:394px"><div class="r"></div><div class="k"></div>
<div style="position:absolute;left:0.8px;top:0;width:438px;height:329px;transform-origin:0 0;transform:scale(0.2595)"><div style="position:absolute;left:-318px;top:-107px">
<div class="st" style="left:344.3px;top:153.9px">ЦИТАТИ</div>
<div class="sl" style="top:193.53px;word-spacing:0.42px">Про соціальні поля та владу:</div>
<div class="sl it" style="top:204.73px;word-spacing:0.87px">«Влада – це не те, що хтось має; це те, що хтось може зробити у</div>
<div class="sl it" style="top:215.93px;word-spacing:0.74px">певному полі.»</div>
<div class="sl" style="top:233.03px;letter-spacing:-0.18px">Про габітус:</div>
<div class="sl it" style="top:244.23px;word-spacing:1.81px">«Габітус – це систематична структура сприйняття, мислення і</div>
<div class="sl it" style="top:255.43px;word-spacing:1.24px">дії, що формується під впливом соціальних умов.»</div>
<div class="sl" style="top:272.53px;word-spacing:0.18px">Про капітал:</div>
<div class="sl it" style="top:283.73px;word-spacing:1.27px">«Соціальні стосунки можна розглядати як капітал – економічний,</div>
<div class="sl it" style="top:294.93px;word-spacing:1.36px">культурний, соціальний чи символічний – який визначає позицію</div>
<div class="sl it" style="top:306.13px;word-spacing:1.05px">індивіда у суспільстві.»</div>
<div class="sl" style="top:323.13px;word-spacing:0.44px">Про освіту і нерівність:</div>
<div class="sl it" style="top:334.33px;word-spacing:1.36px">«Освітня система не просто передає знання; вона також</div>
<div class="sl it" style="top:345.53px;word-spacing:1.92px">відтворює соціальні нерівності.»</div>
<div class="sl" style="top:362.63px;word-spacing:1.02px">Про культуру та символічну владу:</div>
<div class="sl it" style="top:373.83px;word-spacing:1.50px">«Символічна влада полягає у здатності нав’язати значення як</div>
<div class="sl it" style="top:385.03px;word-spacing:1.58px">об&#x27;єктивні, легітимні та природні.»</div>
</div></div>
</div>

<div id="sbar_r" class="abs"></div><div id="sbar_k" class="abs"></div>

<div id="slidetxt">
<div class="st" style="left:344.3px;top:153px">ЦИТАТИ</div>
<div class="sl" style="top:194px;word-spacing:0.42px">Про <u>соціальні</u> поля та <u>владу</u>:</div>
<div class="sl it" style="top:205px;word-spacing:0.87px">«Влада – <u>це</u> не те, <u>що</u> <u>хтось</u> <u>має</u>; <u>це</u> те, <u>що</u> <u>хтось</u> <u>може</u> <u>зробити</u> у</div>
<div class="sl it" style="top:217px;word-spacing:0.74px"><u>певному</u> <u>полі</u>.»</div>
<div class="sl" style="top:234px;letter-spacing:-0.18px">Про <u>габітус</u>:</div>
<div class="sl it" style="top:245px;word-spacing:1.81px">«<u>Габітус</u> – <u>це</u> <u>систематична</u> <u>структура</u> <u>сприйняття</u>, <u>мислення</u> і</div>
<div class="sl it" style="top:256px;word-spacing:1.24px"><u>дії</u>, <u>що</u> <u>формується</u> під <u>впливом</u> <u>соціальних</u> <u>умов</u>.»</div>
<div class="sl" style="top:274px;word-spacing:0.18px">Про <u>капітал</u>:</div>
<div class="sl it" style="top:285px;word-spacing:1.27px">«<u>Соціальні</u> <u>стосунки</u> можна <u>розглядати</u> як <u>капітал</u> – <u>економічний</u>,</div>
<div class="sl it" style="top:296px;word-spacing:1.36px"><u>культурний</u>, <u>соціальний</u> чи <u>символічний</u> – який <u>визначає</u> <u>позицію</u></div>
<div class="sl it" style="top:307px;word-spacing:1.05px"><u>індивіда</u> у <u>суспільстві</u>.»</div>
<div class="sl" style="top:324px;word-spacing:0.44px">Про <u>освіту</u> і <u>нерівність</u>:</div>
<div class="sl it" style="top:335px;word-spacing:1.36px">«<u>Освітня</u> система не просто <u>передає</u> <u>знання</u>; вона також</div>
<div class="sl it" style="top:346px;word-spacing:1.92px"><u>відтворює</u> <u>соціальні</u> <u>нерівності</u>.»</div>
<div class="sl" style="top:364px;word-spacing:1.02px">Про <u>культуру</u> та <u>символічну</u> <u>владу</u>:</div>
<div class="sl it" style="top:375px;word-spacing:1.50px">«<u>Символічна</u> влада <u>полягає</u> у <u>здатності</u> <u>нав’язати</u> <u>значення</u> як</div>
<div class="sl it" style="top:386px;word-spacing:1.58px"><u>об&#x27;єктивні</u>, <u>легітимні</u> та <u>природні</u>.»</div>
</div>

<div id="vscroll" class="abs"></div>
<svg style="left:927.5px;top:407.5px" width="6" height="4" viewBox="0 0 6 4"><path d="M0 0.4 L3 3.6 L6 0.4 Z" fill="#666"/></svg>
<div class="abs" style="left:925px;top:414px;width:11px;height:1px;background:#b9bec6"></div>
<svg style="left:927.5px;top:418.5px" width="6" height="7" viewBox="0 0 6 7"><path d="M0.4 3 L3 0.2 L5.6 3 Z M0.4 6.6 L3 3.8 L5.6 6.6 Z" fill="#222"/></svg>
<svg style="left:927.5px;top:428.5px" width="6" height="7" viewBox="0 0 6 7"><path d="M0.4 0.4 L3 3.2 L5.6 0.4 Z M0.4 4 L3 6.8 L5.6 4 Z" fill="#222"/></svg>
<div id="hsplit" class="abs"></div>
<div id="notes" class="abs"></div>
<span class="t" style="left:156px;top:457.7px;font-size:10.8px;color:#1e1e1e">Заметки к слайду</span>
<div id="nscroll" class="abs"></div>
<svg style="left:927.5px;top:456.5px" width="6" height="4" viewBox="0 0 6 4"><path d="M0 3.6 L3 0.4 L6 3.6 Z" fill="#a4a9b1"/></svg>
<svg style="left:927.5px;top:470px" width="6" height="4" viewBox="0 0 6 4"><path d="M0 0.4 L3 3.6 L6 0.4 Z" fill="#a4a9b1"/></svg>
<!-- status bar -->
<div id="status" class="abs"></div>
<span class="t stxt" style="left:6px;letter-spacing:-.05px">Слайд 58 из 84</span>
<div class="abs ssep" style="left:63.5px"></div>
<span class="t stxt" style="left:72px;letter-spacing:-.1px">"Главная"</span>
<div class="abs ssep" style="left:112px"></div>
<svg style="left:118px;top:479.5px" width="12" height="11" viewBox="0 0 12 11"><path d="M0.6 6.4 L5 4.6 L10.6 6.2 L6 8.6 Z" fill="#e8eefa" stroke="#4a6db5" stroke-width="0.7"/><path d="M0.6 6.4 V7.8 L6 10.2 V8.6 Z M6 8.6 L10.6 6.2 V7.6 L6 10.2 Z" fill="#4a6db5"/><path d="M6 0.6 L10.4 5 M10.4 0.6 L6 5" stroke="#e0342c" stroke-width="1.2"/></svg>
<span class="t stxt" style="left:140.5px;letter-spacing:.1px">русский</span>
<div class="abs ssep" style="left:189.5px"></div>
<div class="abs ssep" style="left:745px"></div>
<div class="abs" style="left:749px;top:479.5px;width:12px;height:12px;background:linear-gradient(#fdeaa6,#f7cf5e);border:1px solid #d9a93a;border-radius:1.5px"></div>
<svg style="left:751.3px;top:481.8px" width="8" height="7" viewBox="0 0 8 7"><rect x="0.4" y="0.4" width="7" height="6" fill="#fff" stroke="#444" stroke-width="0.8"/><path d="M2.6 0.4 V6.4 M2.6 4 H7.4" stroke="#444" stroke-width="0.8"/></svg>
<svg style="left:764px;top:481.8px" width="8" height="7" viewBox="0 0 8 7" fill="none" stroke="#555" stroke-width="0.8"><rect x="0.4" y="0.4" width="2.8" height="2.4"/><rect x="4.6" y="0.4" width="2.8" height="2.4"/><rect x="0.4" y="4" width="2.8" height="2.4"/><rect x="4.6" y="4" width="2.8" height="2.4"/></svg>
<svg style="left:775.7px;top:481.5px" width="8" height="8" viewBox="0 0 8 8" fill="none" stroke="#555" stroke-width="0.8"><path d="M0.4 0.8 L4 2 L7.6 0.8 V6.4 L4 7.6 L0.4 6.4 Z M4 2 V7.6"/><path d="M2.6 3.4 L5.4 5.4 M5.4 3.4 L2.6 5.4" stroke-width="0.6"/></svg>
<svg style="left:789.5px;top:481.5px" width="9" height="8" viewBox="0 0 9 8" fill="none" stroke="#555" stroke-width="0.8"><path d="M0.2 0.6 H8.8 M1.2 0.6 V4.2 H7.8 V0.6 M4.5 4.2 V6 M2.6 7.6 L4.5 6 L6.4 7.6"/></svg>
<span class="t stxt" style="left:805.5px;letter-spacing:-.25px">67%</span>
<svg style="left:827px;top:481px" width="9" height="9" viewBox="0 0 9 9"><circle cx="4.5" cy="4.5" r="4" fill="#f4f5f7" stroke="#6d737c" stroke-width="0.8"/><path d="M2.4 4.5 H6.6" stroke="#333" stroke-width="1"/></svg>
<div class="abs" style="left:838px;top:485px;width:67px;height:1px;background:#8a9098"></div>
<div class="abs" style="left:870.5px;top:482.5px;width:1px;height:6px;background:#8a9098"></div>
<svg style="left:856px;top:480.5px" width="8" height="10" viewBox="0 0 8 10"><path d="M0.5 0.5 H7.5 V6 L4 9.5 L0.5 6 Z" fill="#eef0f3" stroke="#6d737c" stroke-width="0.8"/></svg>
<svg style="left:906px;top:481px" width="9" height="9" viewBox="0 0 9 9"><circle cx="4.5" cy="4.5" r="4" fill="#f4f5f7" stroke="#6d737c" stroke-width="0.8"/><path d="M2.4 4.5 H6.6 M4.5 2.4 V6.6" stroke="#333" stroke-width="1"/></svg>
<svg style="left:921.5px;top:480px" width="11" height="11" viewBox="0 0 11 11"><rect x="0.5" y="0.5" width="10" height="10" rx="1" fill="#e9ebee" stroke="#7d838c" stroke-width="0.8"/><rect x="3.8" y="3.8" width="3.4" height="3.4" fill="#8d939c"/><path d="M1.6 1.6 L3.4 3.4 M9.4 1.6 L7.6 3.4 M1.6 9.4 L3.4 7.6 M9.4 9.4 L7.6 7.6" stroke="#444" stroke-width="0.9"/></svg>

<div class="abs" style="left:10.5px;top:458.3px;width:21.4px;height:21.4px;border-radius:50%;background:#1b201f"></div>
<svg style="left:15.5px;top:462.5px" width="12" height="13" viewBox="0 0 12 13" fill="none" stroke="#21d07c" stroke-width="1"><path d="M1.2 8.6 L7.6 1.8 C8.2 1.2 9 1.2 9.6 1.8 C10.2 2.4 10.2 3.2 9.6 3.8 L3.2 10 H1.2 Z"/><path d="M6.8 2.8 L8.8 4.8"/><path d="M1 12 H10.4"/></svg>

<div id="taskbar" class="abs"></div>
<!-- weather -->
<svg style="left:12.5px;top:497.5px" width="19" height="16" viewBox="0 0 19 16"><path d="M4 15.4 C0.6 15.4 -0.2 11.2 2.8 10 C2.6 6 7.6 4.6 9.4 7.6 C12.6 6.2 15.6 8.8 14.6 11.6 C16.4 12.2 15.8 15.4 13.6 15.4 Z" fill="#d7e5f8"/><path d="M4 15.4 C0.6 15.4 -0.2 11.2 2.8 10 C4.6 12.6 9.6 13.4 14.6 11.6 C16.4 12.2 15.8 15.4 13.6 15.4 Z" fill="#a8c2ec"/><circle cx="13.4" cy="5.2" r="5" fill="#f28a98"/><text x="13.4" y="7.8" text-anchor="middle" font-family="Liberation Sans, sans-serif" font-size="7" fill="#2a1a1a">2</text></svg>
<span class="t tb" style="left:35px;top:500.6px;font-size:8px">2°C</span>
<span class="t" style="left:35px;top:511.4px;font-size:8px;color:#c9d1d0">Cloudy</span>
<!-- start -->
<svg style="left:188.2px;top:501.8px" width="16" height="16" viewBox="0 0 16.5 16.5"><defs><linearGradient id="wg" x1="0" y1="0" x2="1" y2="1"><stop offset="0" stop-color="#7fdcff"/><stop offset="1" stop-color="#2aa6f0"/></linearGradient></defs><rect x="0" y="0" width="7.8" height="7.8" rx="0.6" fill="url(#wg)"/><rect x="8.7" y="0" width="7.8" height="7.8" rx="0.6" fill="url(#wg)"/><rect x="0" y="8.7" width="7.8" height="7.8" rx="0.6" fill="url(#wg)"/><rect x="8.7" y="8.7" width="7.8" height="7.8" rx="0.6" fill="url(#wg)"/></svg>
<!-- search -->
<div class="abs" style="left:213.5px;top:498.2px;width:149.3px;height:22.6px;border-radius:11.5px;background:#30413a;border:1px solid #3f5049"></div>
<svg style="left:220px;top:504px" width="11" height="11" viewBox="0 0 11 11"><circle cx="4.4" cy="4.4" r="3.5" fill="none" stroke="#fff" stroke-width="1.1"/><path d="M7 7 L10.2 10.2" stroke="#fff" stroke-width="1.2" stroke-linecap="round"/></svg>
<span class="t tb" style="left:237.7px;top:505px;font-size:9.8px">Поиск</span>
<svg style="left:326.3px;top:501px" width="34" height="18" viewBox="0 0 34 18"><defs><linearGradient id="cg" x1="0" y1="0" x2="0" y2="1"><stop offset="0" stop-color="#33248a"/><stop offset=".5" stop-color="#5a4cc4"/><stop offset="1" stop-color="#3a3aa8"/></linearGradient><clipPath id="cc"><path d="M0 6.6 C0 4.6 6 0 17 0 C28 0 34 4.6 34 6.6 V13 C34 15.2 27 18 17 18 C7 18 0 15.2 0 13 Z"/></clipPath></defs><g clip-path="url(#cc)"><rect width="34" height="18" fill="url(#cg)"/>
<rect x="15.6" y="2.2" width="2" height="2" rx="0.6" fill="#fffbe8"/>
<path d="M9 13 V7.4 L11 6.6 L12.4 8 V7 L14 7.6 V13 Z M19 13 V7.6 L21 6.8 L22.6 7.4 L24.4 6.6 L25.6 7.6 V13 Z" fill="#a8502e"/>
<path d="M20 13 V8.4 H22 V13 Z" fill="#e0902e"/>
<path d="M0 13 V6.4 L1.4 6 L2.6 4.6 L3.6 3.2 L4.6 4.6 V6 L6 5.4 L7 4 L8 5.6 V7.4 L9.4 7 V13 Z" fill="#e8962c"/>
<path d="M5.6 12 V5.8 L7 4.2 L8.2 5.8 V12 Z M1 12 V7 H3.6 V12 Z" fill="#f8c83c"/>
<path d="M25 13 V6.4 L26.6 6 L27.6 5 L29 3.4 L30.4 5 V6 L32 6.4 L34 6.8 V13 Z" fill="#e8962c"/>
<path d="M27.8 12.6 V5.4 L29 3.8 L30.2 5.4 V12.6 Z" fill="#f8c83c"/><path d="M31 12.6 V7 H33 V12.6 Z" fill="#c87a24"/>
<rect x="0" y="12.6" width="34" height="1" fill="#7a3a2a"/>
<path d="M8 13.6 V11.2 H26 V13.6 H24.6 C24.6 12.2 22.6 12.2 22.6 13.6 H20.8 C20.8 12 18.6 12 18.6 13.6 H15.4 C15.4 12 13.2 12 13.2 13.6 H11.4 C11.4 12.2 9.4 12.2 9.4 13.6 Z" fill="#e8c468"/>
<path d="M0 13.6 H34 V18 H0 Z" fill="#2c3cb4"/><ellipse cx="17" cy="16" rx="2.6" ry="1.2" fill="#bdb0e6" opacity=".85"/><rect x="16" y="13.6" width="2" height="2" fill="#7f86e0" opacity=".7"/>
</g></svg>
<!-- task view -->
<svg style="left:371px;top:501.5px" width="18" height="16" viewBox="0 0 18 16"><rect x="5.6" y="0.6" width="11.4" height="10.4" rx="1.4" fill="#f2f2f2"/><rect x="0.6" y="4.6" width="11.4" height="10.4" rx="1.4" fill="#6c6f72" stroke="#3a3d40" stroke-width="0.6"/></svg>
<!-- edge -->
<svg style="left:401.3px;top:501px" width="17" height="17" viewBox="0 0 17 17"><defs><linearGradient id="eg1" x1="0" y1="0" x2="1" y2="0"><stop offset="0" stop-color="#2aa8ea"/><stop offset=".5" stop-color="#36c9d8"/><stop offset="1" stop-color="#62e25e"/></linearGradient><linearGradient id="eg2" x1="0" y1="0" x2="1" y2="1"><stop offset="0" stop-color="#3a9ae8"/><stop offset="1" stop-color="#1450b0"/></linearGradient></defs>
<path d="M0.6 9.5 C1.8 8 4.6 6.6 7 6.8 C5 8 5 11.4 7.4 13.4 C9.6 15.2 12.8 14.8 14.8 13.2 C13.2 16 10.4 16.6 8.6 16.6 C4 16.6 0.6 13.4 0.6 9.5 Z" fill="url(#eg2)"/>
<path d="M0.6 9.5 C0.6 4 4.5 0.5 9 0.5 C13.5 0.5 16.6 4 16.6 7.6 C16.6 10.6 14.4 12 12.4 12 C10.6 12 9.8 11 10.2 10 C10.8 8.4 9.8 6.6 7.6 6.6 C4.6 6.6 1.8 8 0.6 9.5 Z" fill="url(#eg1)"/>
<circle cx="3.8" cy="12.6" r="3.5" fill="#e6e3e0"/><circle cx="3.8" cy="11.6" r="1.2" fill="#8a8784"/><path d="M1.6 14.6 C1.9 12.8 5.7 12.8 6 14.6 Z" fill="#8a8784"/></svg>
<!-- copilot -->
<svg style="left:432px;top:502.5px" width="15.6" height="14.2" viewBox="0 0 15.6 14.2"><defs><linearGradient id="cpa" x1="0" y1="0" x2="0" y2="1"><stop offset="0" stop-color="#22a8f0"/><stop offset=".5" stop-color="#6fd07a"/><stop offset="1" stop-color="#f8d030"/></linearGradient><linearGradient id="cpb" x1="0" y1="0" x2="0" y2="1"><stop offset="0" stop-color="#b04ae8"/><stop offset=".5" stop-color="#f068a8"/><stop offset="1" stop-color="#f58a30"/></linearGradient></defs>
<path d="M6.4 0.3 H11 C12.2 0.3 12.8 1 13.1 2 L13.8 4.2 H9 Z" fill="#1f56dc"/>
<path d="M3.8 0.3 H8.6 C9.6 0.3 9.9 1 9.6 2 L7.4 9 C7 10.2 6.2 10.6 5.2 10.6 H1.6 C0.4 10.6 -0.1 9.8 0.3 8.6 L2.4 1.8 C2.7 0.8 3.1 0.3 3.8 0.3 Z" fill="url(#cpa)"/>
<path d="M11.8 13.9 H7 C6 13.9 5.7 13.2 6 12.2 L8.2 5.2 C8.6 4 9.4 3.6 10.4 3.6 H14 C15.2 3.6 15.7 4.4 15.3 5.6 L13.2 12.4 C12.9 13.4 12.5 13.9 11.8 13.9 Z" fill="url(#cpb)"/>
<path d="M4.4 10.6 H7 L6 13.6 C5.2 13.4 4.6 12.6 4.4 10.6 Z" fill="#e8452c"/></svg>
<!-- explorer -->
<svg style="left:461px;top:502px" width="18" height="16" viewBox="0 0 18 16"><path d="M0.6 2 C0.6 1.2 1.2 0.6 2 0.6 H6.4 L8.2 2.6 H16 C16.8 2.6 17.4 3.2 17.4 4 V13.6 C17.4 14.4 16.8 15 16 15 H2 C1.2 15 0.6 14.4 0.6 13.6 Z" fill="#f3b62e"/><path d="M0.6 5.4 H17.4 V13.6 C17.4 14.4 16.8 15 16 15 H2 C1.2 15 0.6 14.4 0.6 13.6 Z" fill="#fbd65a"/><rect x="4" y="10" width="10" height="5" rx="0.8" fill="#2d8ee0"/><rect x="6.4" y="11.8" width="5.2" height="1.2" fill="#bfe0fa"/></svg>
<div class="abs" style="left:468.5px;top:521.5px;width:3px;height:1.5px;border-radius:1px;background:#9aa3a3"></div>
<!-- store -->
<svg style="left:492px;top:501px" width="17" height="17" viewBox="0 0 17 17"><path d="M5.4 4.6 V3.4 C5.4 1.8 6.6 0.8 8.5 0.8 C10.4 0.8 11.6 1.8 11.6 3.4 V4.6" fill="none" stroke="#3aa0e8" stroke-width="1.2"/><path d="M0.8 4.4 H16.2 L15.2 14.8 C15.1 15.8 14.4 16.4 13.4 16.4 H3.6 C2.6 16.4 1.9 15.8 1.8 14.8 Z" fill="#f4f4f4"/><rect x="5" y="7" width="3" height="3" fill="#f25022"/><rect x="8.9" y="7" width="3" height="3" fill="#7fba00"/><rect x="5" y="10.9" width="3" height="3" fill="#00a4ef"/><rect x="8.9" y="10.9" width="3" height="3" fill="#ffb900"/></svg>
<!-- opera -->
<svg style="left:522.5px;top:501.5px" width="16.5" height="16.5" viewBox="0 0 16.5 16.5"><ellipse cx="8.25" cy="8.25" rx="7.9" ry="8" fill="#e8202a"/><ellipse cx="8.25" cy="8.25" rx="3.5" ry="5.8" fill="#17241f"/></svg>
<!-- zoom -->
<svg style="left:552px;top:500.8px" width="17" height="17" viewBox="0 0 17 17"><circle cx="8.5" cy="8.5" r="8.3" fill="#1268f3"/><text x="8.3" y="11.3" text-anchor="middle" font-family="Liberation Sans, sans-serif" font-weight="bold" font-size="9.2" fill="#fff" letter-spacing="-0.4">zm</text></svg>
<div class="abs" style="left:559px;top:521.5px;width:3px;height:1.5px;border-radius:1px;background:#9aa3a3"></div>
<!-- chrome -->
<svg style="left:582px;top:500.8px" width="17" height="17" viewBox="0 0 17 17"><circle cx="8.5" cy="8.5" r="8.2" fill="#fbc116"/><path d="M8.5 8.5 L1.4 4.4 A8.2 8.2 0 0 1 15.6 4.4 Z" fill="#e33b2e"/><path d="M8.5 8.5 L1.4 4.4 A8.2 8.2 0 0 0 8.5 16.7 L12 10.6 Z" fill="#2ba24c"/><path d="M8.5 4.4 H15.6 A8.2 8.2 0 0 1 8.5 16.7 L12.1 10.5 Z" fill="#fbc116"/><circle cx="8.5" cy="8.5" r="3.9" fill="#fff"/><circle cx="8.5" cy="8.5" r="3.1" fill="#3f82ee"/></svg>
<!-- viber -->
<svg style="left:612px;top:501px" width="16" height="17" viewBox="0 0 16 17"><path d="M8 0.8 C13.2 0.8 15.2 3.2 15.2 7.6 C15.2 12.2 12.8 14.2 8.6 14.2 L5.2 16.6 V13.8 C2 13 0.8 11 0.8 7.6 C0.8 3.2 2.8 0.8 8 0.8 Z" fill="#7360f2" stroke="#f2eefc" stroke-width="1"/><path d="M5 4.6 C5.6 4 6.4 4.2 6.8 5 C7.2 5.8 6.8 6.2 6.4 6.6 C6.8 8 8 9.2 9.4 9.6 C9.8 9.2 10.2 8.8 11 9.2 C11.8 9.6 12 10.4 11.4 11 C9 12.6 3.4 7 5 4.6 Z" fill="#fff"/><path d="M8.6 3.6 C11 3.8 12.4 5.2 12.4 7.6 M8.8 5.2 C10.2 5.4 10.8 6.2 10.8 7.4" fill="none" stroke="#fff" stroke-width="0.7"/></svg>
<!-- powerpoint active -->
<div class="abs" style="left:637.4px;top:496px;width:27.2px;height:26.6px;border-radius:3px;background:#29383c;border:1px solid #36464a"></div>
<svg style="left:643px;top:501.3px" width="15" height="15" viewBox="0 0 15 15"><defs><linearGradient id="ppg" x1="0" y1="0" x2="1" y2="1"><stop offset="0" stop-color="#fff6f0"/><stop offset="1" stop-color="#f6c4a6"/></linearGradient></defs><rect x="0.5" y="0.5" width="14" height="14" rx="1" fill="url(#ppg)" stroke="#dc5a24" stroke-width="0.9"/><text x="4.6" y="9.6" text-anchor="middle" font-family="Liberation Sans, sans-serif" font-weight="bold" font-size="10.5" fill="#d8481a">P</text><circle cx="10.8" cy="8.6" r="2.4" fill="#f3a982" stroke="#d8481a" stroke-width="0.7"/><path d="M1.6 11.8 H13.4 M1.6 13.2 H13.4" stroke="#e98a5c" stroke-width="0.7"/></svg>
<div class="abs" style="left:645.5px;top:520.3px;width:10.5px;height:1.7px;border-radius:1px;background:#4cc2ff"></div>
<!-- tray -->
<svg style="left:712px;top:505.5px" width="9" height="6" viewBox="0 0 9 6"><path d="M0.8 5 L4.5 1.2 L8.2 5" fill="none" stroke="#fff" stroke-width="1.2"/></svg>
<svg style="left:733px;top:504px" width="12" height="11" viewBox="0 0 12 11"><path d="M2.6 7.4 C0.4 7.4 0.2 4.6 2.2 4.2 C2.4 1.6 5.8 1 6.8 3.2 C8.8 2.6 10.2 4.4 9.4 6 C10.4 6.4 10 7.4 9.2 7.4 Z" fill="#dfe6ee"/><circle cx="8.2" cy="7.6" r="2.9" fill="#2a7de0"/><path d="M6.8 7.2 A1.6 1.6 0 0 1 9.6 6.8 M9.6 8 A1.6 1.6 0 0 1 6.8 8.4" fill="none" stroke="#fff" stroke-width="0.6"/></svg>
<svg style="left:755px;top:503.5px" width="12" height="12" viewBox="0 0 12 12"><path d="M1.4 5.4 A4.2 4.2 0 0 1 8.8 2.6 M9.6 5.6 A4.2 4.2 0 0 1 2.4 8.6" fill="none" stroke="#fff" stroke-width="1.1"/><path d="M9.6 0.6 V3.4 H6.8 M1.4 10.4 V7.8 H4.2" fill="none" stroke="#fff" stroke-width="1"/><circle cx="9.2" cy="8.8" r="2.4" fill="#f08a24"/></svg>
<svg style="left:779px;top:502.5px" width="8" height="13" viewBox="0 0 8 13"><rect x="2.2" y="0.4" width="3.6" height="7.2" rx="1.8" fill="none" stroke="#4cc2ff" stroke-width="0.9"/><path d="M0.6 5.6 C0.6 10.4 7.4 10.4 7.4 5.6 M4 9.4 V12 M2.2 12.2 H5.8" fill="none" stroke="#4cc2ff" stroke-width="0.9"/></svg>
<span class="t tb" style="left:802px;top:506.3px;font-size:7.6px">УКР</span>
<svg style="left:828px;top:503.5px" width="12" height="10" viewBox="0 0 12 10"><path d="M0.6 3.4 C3.6 0.2 8.4 0.2 11.4 3.4 M2.4 5.2 C4.4 3 7.6 3 9.6 5.2 M4.2 7 C5.2 5.8 6.8 5.8 7.8 7" fill="none" stroke="#fff" stroke-width="1"/><circle cx="6" cy="8.6" r="0.9" fill="#fff"/></svg>
<svg style="left:844.5px;top:503.5px" width="12" height="11" viewBox="0 0 12 11"><path d="M0.6 3.8 H2.6 L5.4 1 V10 L2.6 7.2 H0.6 Z" fill="none" stroke="#fff" stroke-width="0.9"/><path d="M7 3.6 C8 4.6 8 6.4 7 7.4 M8.6 2.2 C10.4 4 10.4 7 8.6 8.8" fill="none" stroke="#fff" stroke-width="0.8"/></svg>
<svg style="left:861px;top:503.5px" width="12" height="10" viewBox="0 0 12 10"><rect x="0.6" y="3" width="9.4" height="5.6" rx="1" fill="none" stroke="#fff" stroke-width="0.9"/><rect x="1.8" y="4.2" width="6" height="3.2" fill="#fff"/><path d="M10.6 4.8 V6.8" stroke="#fff" stroke-width="1"/><path d="M2.2 3 V0.8 M4 3 V0.8 M1.4 0.8 H4.8" stroke="#fff" stroke-width="0.8" fill="none"/></svg>
<span class="t tb" style="left:904px;top:500.8px;font-size:7.8px;letter-spacing:-.25px">16:32</span>
<span class="t tb" style="left:884.5px;top:511.5px;font-size:7.8px;letter-spacing:-.2px">15.12.2025</span>

<div id="zoom" class="abs"></div>
<!-- participant 1 -->
<div class="abs" style="left:831px;top:40px;width:54px;height:54.5px;border-radius:4px;background:#0e86d4"></div>
<span class="t" style="left:850.7px;top:56.4px;font-size:22px;font-weight:bold;color:#fff">S</span>
<div class="nm" style="top:97.3px;width:89px"></div>
<span class="t nmt" style="top:98.8px;letter-spacing:.07px">Снісаренко Софія</span>
<!-- participant 2 -->
<span class="t" style="left:814px;top:149px;font-size:10.1px;font-weight:bold;color:#fff">Підліпна  Оксан...</span>
<div class="nm" style="top:183.3px;width:103px"></div>
<span class="t nmt" style="top:184.8px;letter-spacing:.05px">Підліпна Оксана УАФ</span>
<!-- participant 3 -->
<div class="abs" style="left:831px;top:212.5px;width:54px;height:54px;border-radius:4px;background:#c4390d"></div>
<span class="t" style="left:848px;top:226.6px;font-size:28.4px;color:#fff">A</span>
<div class="nm" style="top:269.3px;width:70.5px"></div>
<span class="t nmt" style="top:270.8px">Аліна Басова</span>
<!-- participant 4 -->
<svg style="left:831px;top:299px" width="54" height="54.4" viewBox="0 0 54 54.4"><defs><clipPath id="pc"><rect width="54" height="54.4" rx="4"/></clipPath><radialGradient id="pbg" cx=".5" cy=".45" r=".75"><stop offset="0" stop-color="#e0dedc"/><stop offset=".6" stop-color="#d2d0ce"/><stop offset="1" stop-color="#a9a8a6"/></radialGradient></defs><g clip-path="url(#pc)"><rect width="54" height="54.4" fill="url(#pbg)"/>
<path d="M18.4 54.4 L20.4 44 H27 L24.6 54.4 Z M28 54.4 L28.4 44 H35 L34 54.4 Z" fill="#c3cdc7"/>
<path d="M18.6 20.4 C19 18 21.6 17.6 24 16.8 H31 C33.6 17.6 36 18 36.4 20.6 L37 33 C36.8 35 35.6 36 35.4 37 L37 45.6 L19 45.8 L20 37 C18.6 35 17.8 33 17.8 31 Z" fill="#1b1b1f"/>
<path d="M23.2 10 C23 5.6 31.4 5 31.8 10 L33 25 C32 27.6 30.6 27 30 25 L29.4 16 H26 L25.4 24 C24.6 27 23 27.4 22.4 25 Z" fill="#6b4631"/>
<path d="M24.4 10 C24.4 7.4 28.6 7.4 28.6 10.2 C28.6 13 27.8 15 26.4 15 C25 15 24.4 13 24.4 10 Z" fill="#dcb99f"/>
<path d="M26 15 H28.6 L29 20 L27.6 24 L26.4 20 Z" fill="#e2d6cf"/>
<path d="M22 31.4 H33" stroke="#3a3630" stroke-width="0.9"/><circle cx="28" cy="31.4" r="0.9" fill="#b9a074"/><circle cx="26.6" cy="35.6" r="0.7" fill="#b9a074"/><circle cx="29.4" cy="35.6" r="0.7" fill="#b9a074"/>
</g></svg>
<div class="nm" style="top:355.3px;width:105.5px"></div>
<span class="t nmt" style="top:356.8px;letter-spacing:.15px">Шевцова Єва УПФ-24</span>
<svg style="left:785.5px;top:98.1px" width="9" height="10" viewBox="0 0 9 10"><rect x="3" y="0.6" width="3" height="5.4" rx="1.5" fill="#e8474f"/><path d="M1.4 4.6 C1.4 8.4 7.6 8.4 7.6 4.6 M4.5 7.6 V9.4" fill="none" stroke="#e8474f" stroke-width="0.8"/><path d="M8 0.6 L1 9.4" stroke="#e8474f" stroke-width="1"/></svg>
<svg style="left:785.5px;top:184.1px" width="9" height="10" viewBox="0 0 9 10"><rect x="3" y="0.6" width="3" height="5.4" rx="1.5" fill="#e8474f"/><path d="M1.4 4.6 C1.4 8.4 7.6 8.4 7.6 4.6 M4.5 7.6 V9.4" fill="none" stroke="#e8474f" stroke-width="0.8"/><path d="M8 0.6 L1 9.4" stroke="#e8474f" stroke-width="1"/></svg>
<svg style="left:785.5px;top:270.1px" width="9" height="10" viewBox="0 0 9 10"><rect x="3" y="0.6" width="3" height="5.4" rx="1.5" fill="#e8474f"/><path d="M1.4 4.6 C1.4 8.4 7.6 8.4 7.6 4.6 M4.5 7.6 V9.4" fill="none" stroke="#e8474f" stroke-width="0.8"/><path d="M8 0.6 L1 9.4" stroke="#e8474f" stroke-width="1"/></svg>
<svg style="left:785.5px;top:356.1px" width="9" height="10" viewBox="0 0 9 10"><rect x="3" y="0.6" width="3" height="5.4" rx="1.5" fill="#e8474f"/><path d="M1.4 4.6 C1.4 8.4 7.6 8.4 7.6 4.6 M4.5 7.6 V9.4" fill="none" stroke="#e8474f" stroke-width="0.8"/><path d="M8 0.6 L1 9.4" stroke="#e8474f" stroke-width="1"/></svg>

</body>
</html>
